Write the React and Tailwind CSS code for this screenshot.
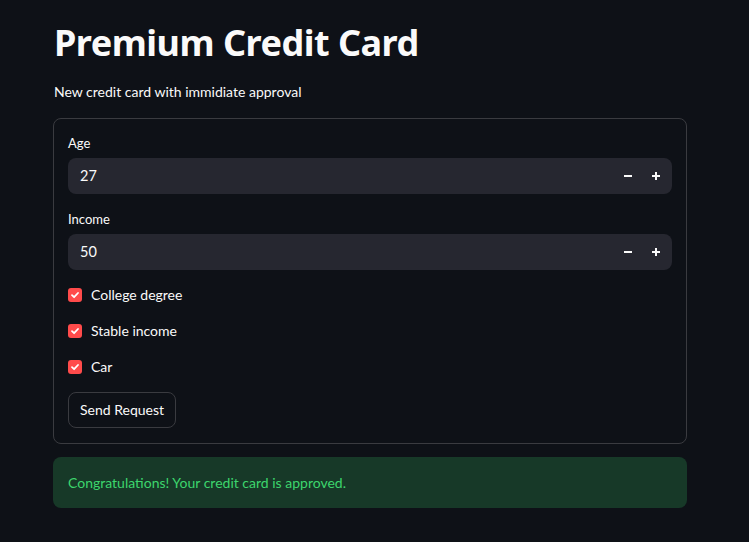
import React from "react";

function NumberInput({ label, value }) {
  return (
    <div className="flex flex-col">
      <div className="text-[13px] leading-[16px] text-[#fafafa] mb-[7px]">{label}</div>
      <div className="h-[36px] rounded-[8px] bg-[#262730] flex items-center pl-[12px] pr-[2px]">
        <span className="flex-1 text-[14.5px] text-[#fafafa]">{value}</span>
        <div className="flex items-center">
          <div className="w-[28px] h-[36px] flex items-center justify-center">
            <svg width="10" height="10" viewBox="0 0 10 10"><rect x="1" y="4" width="8" height="2" fill="#fafafa" /></svg>
          </div>
          <div className="w-[28px] h-[36px] flex items-center justify-center">
            <svg width="10" height="10" viewBox="0 0 10 10"><rect x="1" y="4" width="8" height="2" fill="#fafafa" /><rect x="4" y="1" width="2" height="8" fill="#fafafa" /></svg>
          </div>
        </div>
      </div>
    </div>
  );
}

function Check({ label }) {
  return (
    <div className="flex items-center h-[24px]">
      <div className="w-[14px] h-[14px] rounded-[3px] bg-[#ff4b4b] flex items-center justify-center">
        <svg width="10" height="10" viewBox="0 0 10 10"><path d="M2 5.2 L4.1 7.2 L8 3" stroke="#fff" strokeWidth="1.8" fill="none" strokeLinecap="round" strokeLinejoin="round" /></svg>
      </div>
      <span className="ml-[9px] text-[14px] leading-[20px] text-[#fafafa]">{label}</span>
    </div>
  );
}

export default function App() {
  return (
    <div className="min-h-[542px] bg-[#0e1117] text-[#fafafa]" style={{ fontFamily: 'Lato, "Noto Sans", sans-serif' }}>
      <div className="w-[634px] ml-[53px] pt-[20px]">
        <h1 className="text-[36px] font-bold leading-[46px] tracking-[-0.5px] pl-[1px]" style={{ fontFamily: '"Noto Sans", sans-serif' }}>Premium Credit Card</h1>
        <p className="text-[14px] leading-[20px] mt-[16px] pl-[1px]">New credit card with immidiate approval</p>
        <div className="mt-[16px] border border-[#3a3b40] rounded-[8px] px-[14px] pt-[16px] pb-[15px]">
          <div className="flex flex-col gap-[17px]">
            <NumberInput label="Age" value="27" />
            <NumberInput label="Income" value="50" />
          </div>
          <div className="flex flex-col gap-[12px] mt-[13px]">
            <Check label="College degree" />
            <Check label="Stable income" />
            <Check label="Car" />
          </div>
          <button className="mt-[13px] h-[36px] px-[11px] rounded-[8px] border border-[#3a3b40] bg-[#0e1117] text-[14px] leading-[20px] text-[#fafafa]">Send Request</button>
        </div>
        <div className="mt-[13px] h-[51px] rounded-[8px] bg-[#173928] flex items-center px-[15px] text-[14px] text-[#3dd56d]">
          Congratulations! Your credit card is approved.
        </div>
      </div>
    </div>
  );
}
